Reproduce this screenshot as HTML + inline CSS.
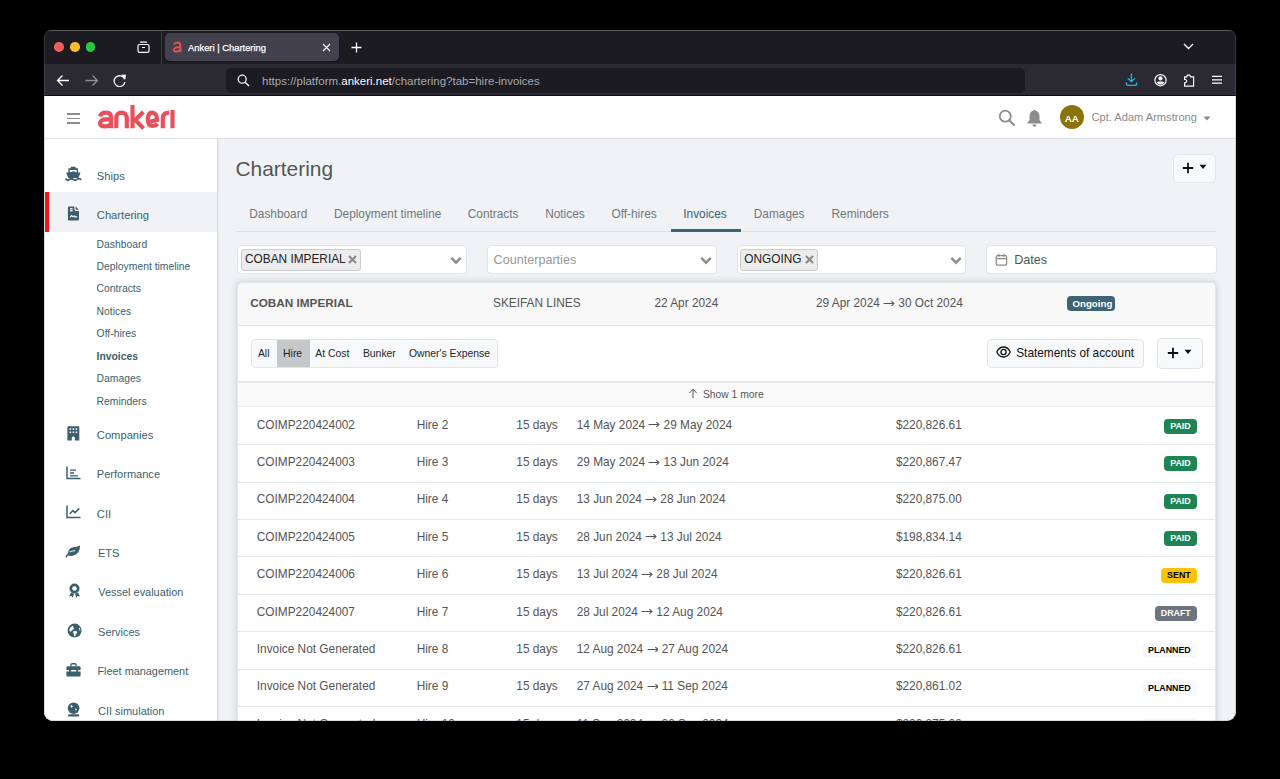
<!DOCTYPE html>
<html><head><meta charset="utf-8"><title>Ankeri | Chartering</title>
<style>
html,body{margin:0;padding:0;background:#000;width:1280px;height:779px;overflow:hidden;}
body{font-family:"Liberation Sans", sans-serif;}
#win{position:absolute;left:0;top:0;width:1280px;height:779px;clip-path:inset(30px 44px 58px 44px round 7px 7px 9px 9px);}
.t{position:absolute;line-height:1;white-space:nowrap;}
.r{position:absolute;display:block;}
</style></head><body><div id="win">
<div class="r" style="left:44px;top:30px;width:1192px;height:34px;background:#1c1b22;"></div>
<div class="r" style="left:44px;top:30px;width:1192px;height:1px;background:#4a4a52;"></div>
<div class="r" style="left:44px;top:64px;width:1192px;height:31px;background:#2b2a33;"></div>
<div class="r" style="left:44px;top:95px;width:1192px;height:1px;background:#0b0b0f;"></div>
<div class="r" style="left:54.4px;top:42px;width:9.6px;height:9.6px;border-radius:50%;background:#ee5f57;"></div>
<div class="r" style="left:70.0px;top:42px;width:9.6px;height:9.6px;border-radius:50%;background:#fbbd2e;"></div>
<div class="r" style="left:85.6px;top:42px;width:9.6px;height:9.6px;border-radius:50%;background:#28c840;"></div>
<svg class="r" style="left:137px;top:41px;" width="13" height="12" viewBox="0 0 13 12"><rect x="1" y="3.5" width="11" height="7.8" rx="1.6" fill="none" stroke="#fbfbfe" stroke-width="1.2"/><path d="M3 1.2h7" stroke="#fbfbfe" stroke-width="1.2"/><path d="M5 6.5h3" stroke="#fbfbfe" stroke-width="1.2"/></svg>
<div class="r" style="left:161px;top:31px;width:1px;height:33px;background:#3a3944;"></div>
<div class="r" style="left:165px;top:33px;width:174px;height:28px;background:#42414d;border-radius:5px;"></div>
<svg class="r" style="left:172px;top:41px;" width="10" height="12" viewBox="0 0 10 12"><path d="M1.9 3.4C2.8 1.8 4.2 1.4 5.2 1.4 7.2 1.4 8.3 2.6 8.3 4.6V11.2M8.3 6.4C4.8 6 1.8 6.6 1.8 8.8 1.8 10.8 5.8 11 8.3 9.2" fill="none" stroke="#e84e55" stroke-width="2"/></svg>
<div class="t" style="left:188.00px;top:42.74px;font-size:9.4px;color:#fbfbfe;-webkit-text-stroke:0.25px #fbfbfe;">Ankeri | Chartering</div>
<svg class="r" style="left:322px;top:43px;" width="9" height="9" viewBox="0 0 9 9"><path d="M1 1L8 8M8 1L1 8" stroke="#fbfbfe" stroke-width="1.15"/></svg>
<svg class="r" style="left:351px;top:42px;" width="11" height="11" viewBox="0 0 11 11"><path d="M5.5 0.5V10.5M0.5 5.5H10.5" stroke="#fbfbfe" stroke-width="1.3"/></svg>
<svg class="r" style="left:1183px;top:43px;" width="11" height="7" viewBox="0 0 11 7"><path d="M1 1L5.5 5.5L10 1" fill="none" stroke="#fbfbfe" stroke-width="1.3"/></svg>
<svg class="r" style="left:56px;top:74px;" width="14" height="13" viewBox="0 0 14 13"><path d="M1.5 6.5H13M6.5 1.5L1.5 6.5L6.5 11.5" fill="none" stroke="#fbfbfe" stroke-width="1.3"/></svg>
<svg class="r" style="left:85px;top:74px;" width="14" height="13" viewBox="0 0 14 13"><path d="M0.5 6.5H12M7.5 1.5L12.5 6.5L7.5 11.5" fill="none" stroke="#8f8f9d" stroke-width="1.3"/></svg>
<svg class="r" style="left:113px;top:74px;" width="14" height="13" viewBox="0 0 14 13"><path d="M11.6 5.2A5.4 5.4 0 1 0 11.9 8" fill="none" stroke="#fbfbfe" stroke-width="1.3"/><path d="M8.2 0.8L12.8 0.6L12.6 5.2Z" fill="#fbfbfe"/></svg>
<div class="r" style="left:226px;top:68px;width:799px;height:25px;background:#1c1b22;border-radius:5px;"></div>
<svg class="r" style="left:237px;top:74px;" width="13" height="13" viewBox="0 0 13 13"><circle cx="5.2" cy="5.2" r="4" fill="none" stroke="#fbfbfe" stroke-width="1.3"/><path d="M8.2 8.2L12 12" stroke="#fbfbfe" stroke-width="1.4"/></svg>
<div class="t" style="left:262.00px;top:75.57px;font-size:11.5px;color:#fbfbfe;"><span style="color:#a8a8b0">https://platform.</span>ankeri.net<span style="color:#a8a8b0">/chartering?tab=hire-invoices</span></div>
<svg class="r" style="left:1124px;top:72px;" width="15" height="15" viewBox="0 0 15 15"><path d="M7.4 1.6V9.6M3.8 6.2L7.4 9.7L11 6.2" fill="none" stroke="#1fb6e0" stroke-width="1.3"/><path d="M2.4 10.6V12C2.4 12.9 3 13.4 3.8 13.4H11.2C12 13.4 12.6 12.9 12.6 12V10.6" fill="none" stroke="#1fb6e0" stroke-width="1.4"/></svg>
<svg class="r" style="left:1153px;top:73px;" width="15" height="15" viewBox="0 0 15 15"><circle cx="7.5" cy="7.2" r="5.6" fill="none" stroke="#fbfbfe" stroke-width="1.2"/><circle cx="7.5" cy="5.4" r="2.1" fill="#fbfbfe"/><path d="M3.6 9.2C5 8.3 10 8.3 11.4 9.2 10.6 10.8 9.2 11.5 7.5 11.5 5.8 11.5 4.4 10.8 3.6 9.2Z" fill="#fbfbfe"/></svg>
<svg class="r" style="left:1182px;top:73px;" width="14" height="15" viewBox="0 0 14 15"><path d="M2.6 3.8H4.9C4.7 1.1 8.6 1.1 8.4 3.8H11.6V13.2H2.6V9.8C5.3 10 5.3 6.2 2.6 6.4Z" fill="none" stroke="#fbfbfe" stroke-width="1.2" stroke-linejoin="round"/></svg>
<svg class="r" style="left:1211px;top:74px;" width="12" height="11" viewBox="0 0 12 11"><path d="M1 2.4H11M1 5.8H11M1 9.1H11" stroke="#fbfbfe" stroke-width="1.3"/></svg>
<div class="r" style="left:44px;top:96px;width:1192px;height:625px;background:#f0f2f5;"></div>
<div class="r" style="left:44px;top:96px;width:1192px;height:42px;background:#fff;"></div>
<div class="r" style="left:44px;top:138px;width:1192px;height:1px;background:#dfe3e8;"></div>
<div class="r" style="left:67px;top:113.2px;width:12.5px;height:1.6px;background:#8c8c8c;"></div>
<div class="r" style="left:67px;top:117.7px;width:12.5px;height:1.6px;background:#8c8c8c;"></div>
<div class="r" style="left:67px;top:122.2px;width:12.5px;height:1.6px;background:#8c8c8c;"></div>
<svg class="r" style="left:97px;top:104px;" width="80" height="26" viewBox="0 0 80 26"><g fill="none" stroke="#e8505b" stroke-width="4.2" stroke-linecap="butt"><path d="M2.9 12.4C3.8 9.8 6.5 8.6 9.2 8.6 12.4 8.6 14.2 10.4 14.2 13.6V24.2"/><path d="M14.2 15.3H8.8C5.4 15.3 3.1 16.8 3.1 19.3 3.1 21.8 5.2 22.4 8 22.4 10.7 22.4 12.9 21.5 14.2 19.9"/><path d="M19.3 24.2V14C19.3 10.5 21.5 8.6 24.5 8.6 27.6 8.6 29.8 10.5 29.8 14V24.2"/><path d="M35.5 1V24.2"/><path d="M46.4 8L38.1 15.9L46.6 24.4"/><path d="M51.2 18.2L60.2 15.8C59.9 11.2 57.8 8.6 55.2 8.6 52.2 8.6 50.9 11.8 50.9 15.6 50.9 20 52.6 22 55.6 22 57.6 22 59.3 21.3 60.6 19.8"/><path d="M65.8 24.2V14.2C65.8 10.2 68.3 8.6 72.2 8.6"/><path d="M75.5 6V24.2"/></g></svg>
<svg class="r" style="left:998px;top:109px;" width="18" height="17" viewBox="0 0 18 17"><circle cx="7.3" cy="7.2" r="5.5" fill="none" stroke="#8c8c8c" stroke-width="1.8"/><path d="M11.2 11.2L16 16" stroke="#8c8c8c" stroke-width="2" stroke-linecap="round"/></svg>
<svg class="r" style="left:1026px;top:109px;" width="17" height="19" viewBox="0 0 17 19"><path d="M8.5 0.4L9.4 1.6C12 2.2 13.5 4.6 13.5 7.3V11.2L15.6 13.8V14.6H1.4V13.8L3.5 11.2V7.3C3.5 4.6 5 2.2 7.6 1.6Z" fill="#8c8c8c"/><path d="M6.5 15.6H10.5C10.5 17 9.6 17.8 8.5 17.8 7.4 17.8 6.5 17 6.5 15.6Z" fill="#8a8a8a"/></svg>
<div class="r" style="left:1060px;top:105px;width:24px;height:24px;border-radius:50%;background:#8b740c;"></div>
<div class="t" style="left:1064.80px;top:114.00px;font-size:9.8px;color:#fff;font-weight:700;">AA</div>
<div class="t" style="left:1091.50px;top:111.60px;font-size:11.1px;color:#8a8a8a;">Cpt. Adam Armstrong</div>
<svg class="r" style="left:1203px;top:116px;" width="8" height="5" viewBox="0 0 8 5"><path d="M0.5 0.5H7.5L4 4.5Z" fill="#8a8a8a"/></svg>
<div class="r" style="left:44px;top:139px;width:173px;height:582px;background:#fff;"></div>
<div class="r" style="left:217px;top:139px;width:1px;height:582px;background:#d9dcdf;"></div>
<div class="r" style="left:218px;top:139px;width:1px;height:582px;background:#e6e9ec;"></div>
<div class="r" style="left:45px;top:192px;width:172px;height:40px;background:#f0f2f5;"></div>
<div class="r" style="left:45px;top:192px;width:4px;height:40px;background:#f5141e;"></div>
<div class="t" style="left:96.80px;top:170.82px;font-size:11.2px;color:#3b5f6d;">Ships</div>
<div class="t" style="left:96.80px;top:210.22px;font-size:11.2px;color:#3b5f6d;">Chartering</div>
<div class="t" style="left:96.80px;top:430.12px;font-size:11.2px;color:#3b5f6d;">Companies</div>
<div class="t" style="left:96.80px;top:469.45px;font-size:11.05px;color:#3b5f6d;">Performance</div>
<div class="t" style="left:96.80px;top:508.72px;font-size:11.2px;color:#3b5f6d;">CII</div>
<div class="t" style="left:97.90px;top:547.85px;font-size:11.05px;color:#3b5f6d;">ETS</div>
<div class="t" style="left:98.30px;top:587.43px;font-size:10.95px;color:#3b5f6d;">Vessel evaluation</div>
<div class="t" style="left:98.10px;top:626.83px;font-size:10.95px;color:#3b5f6d;">Services</div>
<div class="t" style="left:97.40px;top:666.07px;font-size:10.9px;color:#3b5f6d;">Fleet management</div>
<div class="t" style="left:98.10px;top:705.63px;font-size:10.95px;color:#3b5f6d;">CII simulation</div>
<div class="t" style="left:96.60px;top:239.54px;font-size:10.35px;color:#3b5f6d;">Dashboard</div>
<div class="t" style="left:96.60px;top:261.97px;font-size:10.35px;color:#3b5f6d;">Deployment timeline</div>
<div class="t" style="left:96.60px;top:284.40px;font-size:10.35px;color:#3b5f6d;">Contracts</div>
<div class="t" style="left:96.60px;top:306.83px;font-size:10.35px;color:#3b5f6d;">Notices</div>
<div class="t" style="left:96.60px;top:329.26px;font-size:10.35px;color:#3b5f6d;">Off-hires</div>
<div class="t" style="left:96.60px;top:351.69px;font-size:10.35px;color:#3b5f6d;font-weight:700;">Invoices</div>
<div class="t" style="left:96.60px;top:374.12px;font-size:10.35px;color:#3b5f6d;">Damages</div>
<div class="t" style="left:96.60px;top:396.55px;font-size:10.35px;color:#3b5f6d;">Reminders</div>
<svg class="r" style="left:65px;top:166px;" width="17" height="16" viewBox="0 0 17 16"><path d="M5.8 0.7H10.6V2.2H13V7.2H3.4V2.2H5.8Z" fill="#3b5f6d"/><path d="M4.8 3.9H11.6V6.4C10.2 6.4 9.6 5.3 8.2 5.3 6.8 5.3 6.2 6.4 4.8 6.4Z" fill="#fff"/><path d="M1.2 6.8C1.2 6.6 1.4 6.5 1.6 6.5H15C15.2 6.5 15.4 6.6 15.4 6.8L13.4 11.9H3.2Z" fill="#3b5f6d"/><path d="M1 13.2C2.2 14.5 3.4 14.5 4.6 13.4 5.8 12.5 7 12.5 8.2 13.4 9.4 14.5 10.8 14.5 12 13.4 13.2 12.5 14.4 12.5 15.6 13.2" fill="none" stroke="#3b5f6d" stroke-width="1.8" stroke-linecap="round"/></svg>
<svg class="r" style="left:67px;top:206px;" width="13" height="15" viewBox="0 0 13 15"><path d="M2.2 0.4H7.4V3.6C7.4 4.4 8 5 8.8 5H12V13C12 13.9 11.4 14.6 10.5 14.6H2.4C1.5 14.6 0.9 13.9 0.9 13V1.8C0.9 1 1.4 0.4 2.2 0.4Z" fill="#3b5f6d"/><path d="M8.6 0.6L11.8 3.8H8.6Z" fill="#3b5f6d"/><rect x="3" y="2.1" width="2.6" height="1.3" fill="#fff"/><rect x="3" y="4.1" width="2.6" height="1.3" fill="#fff"/><path d="M3 11.4L4.6 9.6L5.9 10.8L7.2 9.9L8.1 10.9H10.2" fill="none" stroke="#fff" stroke-width="1.1"/></svg>
<svg class="r" style="left:67px;top:426px;" width="13" height="15" viewBox="0 0 13 15"><path d="M1.5 0.3H11.2C11.9 0.3 12.3 0.8 12.3 1.4V14.5H7.8V12C7.8 11.2 7.1 10.6 6.3 10.6 5.5 10.6 4.8 11.2 4.8 12V14.5H0.4V1.4C0.4 0.8 0.8 0.3 1.5 0.3Z" fill="#3b5f6d"/><g fill="#fff"><rect x="2.6" y="2.3" width="1.6" height="1.6"/><rect x="5.6" y="2.3" width="1.6" height="1.6"/><rect x="8.6" y="2.3" width="1.6" height="1.6"/><rect x="2.6" y="5.5" width="1.6" height="1.6"/><rect x="5.6" y="5.5" width="1.6" height="1.6"/><rect x="8.6" y="5.5" width="1.6" height="1.6"/></g></svg>
<svg class="r" style="left:66px;top:466px;" width="15" height="14" viewBox="0 0 15 14"><path d="M1 0.5V12.6H14.5" fill="none" stroke="#3b5f6d" stroke-width="1.5"/><path d="M4 4.2H10M4 7H8M4 9.8H12" stroke="#3b5f6d" stroke-width="1.3"/></svg>
<svg class="r" style="left:66px;top:505px;" width="15" height="14" viewBox="0 0 15 14"><path d="M1 0.5V12.6H14.5" fill="none" stroke="#3b5f6d" stroke-width="1.5"/><path d="M3.8 9L6.8 5.6L9 7.6L13.2 3.4" fill="none" stroke="#3b5f6d" stroke-width="1.5"/></svg>
<svg class="r" style="left:65px;top:545px;" width="16" height="13" viewBox="0 0 16 13"><path d="M1 12.5C2.5 9 5 6.6 9 5.5 5.5 7.2 3.8 9 3 10.5 6 11.5 11 10.8 13.5 7 14.8 5 15 2.5 15 0.5 12 2.5 8 1.3 5.2 3.5 3.3 5 3 7.2 3.3 8.6" fill="#3b5f6d"/><path d="M1 12.5C2.5 9 5 6.6 9 5.5" fill="none" stroke="#3b5f6d" stroke-width="1.4"/><path d="M4.6 7.2C6 6 8 5.6 10.2 5.7" fill="none" stroke="#fff" stroke-width="1.1"/></svg>
<svg class="r" style="left:68px;top:583px;" width="13" height="15" viewBox="0 0 13 15"><circle cx="6.5" cy="5.5" r="5" fill="#3b5f6d"/><circle cx="6.5" cy="5.5" r="2.3" fill="#fff"/><path d="M3 9.5L1 13.5L3.5 13L4.6 14.8L6 10.8M10 9.5L12 13.5L9.5 13L8.4 14.8L7 10.8" fill="#3b5f6d"/></svg>
<svg class="r" style="left:67px;top:623px;" width="15" height="15" viewBox="0 0 15 15"><circle cx="7.6" cy="7.6" r="7" fill="#3b5f6d"/><path d="M2.3 7.8C2.4 5.6 3.6 3.9 5.3 2.9L6.6 3.4 6 4.6 7.2 5.3 6.4 6.6 4.8 6.9 4.6 8.2 3.4 8.6Z" fill="#fff"/><path d="M6.2 8.2L8.8 7.9 10.2 8.8 9.8 10.6 8.6 11.6 8.2 13.4 7.3 13.2 6.8 11 6.1 9.6Z" fill="#fff"/><path d="M12 4.2C12.9 5.1 13.4 6.3 13.5 7.6L12.6 7.4 12.1 6Z" fill="#fff"/></svg>
<svg class="r" style="left:66px;top:663px;" width="15" height="14" viewBox="0 0 15 14"><path d="M5 3.2V1.8C5 1.2 5.4 0.8 6 0.8H9C9.6 0.8 10 1.2 10 1.8V3.2" fill="none" stroke="#3b5f6d" stroke-width="1.4"/><path d="M1.8 3.2H13.2C14 3.2 14.6 3.8 14.6 4.6V7H0.4V4.6C0.4 3.8 1 3.2 1.8 3.2Z" fill="#3b5f6d"/><path d="M0.4 8.4H14.6V12.2C14.6 13 14 13.6 13.2 13.6H1.8C1 13.6 0.4 13 0.4 12.2Z" fill="#3b5f6d"/><rect x="3" y="6" width="1.8" height="3.2" fill="#3b5f6d"/><rect x="10.2" y="6" width="1.8" height="3.2" fill="#3b5f6d"/></svg>
<svg class="r" style="left:67px;top:702px;" width="14" height="15" viewBox="0 0 14 15"><circle cx="6.6" cy="6.2" r="5.8" fill="#3b5f6d"/><path d="M4.6 2.4L5.1 3.8L6.5 4.3L5.1 4.8L4.6 6.2L4.1 4.8L2.7 4.3L4.1 3.8Z" fill="#fff"/><circle cx="9" cy="7.4" r="0.9" fill="#fff" opacity=".8"/><path d="M1.6 12.3H11.6L12.4 14.4H0.8Z" fill="#3b5f6d"/></svg>
<div class="t" style="left:235.50px;top:158.51px;font-size:20.9px;color:#555;">Chartering</div>
<div class="r" style="left:1173px;top:154px;width:43px;height:29px;background:#f8f9fa;border:1px solid #e3e6ea;border-radius:5px;box-sizing:border-box;"></div>
<svg class="r" style="left:1182px;top:162px;" width="12" height="12" viewBox="0 0 12 12"><path d="M6 0.8V11.2M0.8 6H11.2" stroke="#111" stroke-width="1.8"/></svg>
<svg class="r" style="left:1199px;top:164px;" width="8" height="6" viewBox="0 0 8 6"><path d="M0.5 0.8H7.5L4 5Z" fill="#111"/></svg>
<div class="t" style="left:249.30px;top:208.97px;font-size:11.85px;color:#6f777c;">Dashboard</div>
<div class="t" style="left:334.00px;top:208.97px;font-size:11.85px;color:#6f777c;">Deployment timeline</div>
<div class="t" style="left:467.80px;top:208.97px;font-size:11.85px;color:#6f777c;">Contracts</div>
<div class="t" style="left:545.20px;top:208.97px;font-size:11.85px;color:#6f777c;">Notices</div>
<div class="t" style="left:611.50px;top:208.97px;font-size:11.85px;color:#6f777c;">Off-hires</div>
<div class="t" style="left:683.30px;top:208.97px;font-size:11.85px;color:#3d6472;">Invoices</div>
<div class="t" style="left:753.80px;top:208.97px;font-size:11.85px;color:#6f777c;">Damages</div>
<div class="t" style="left:831.50px;top:208.97px;font-size:11.85px;color:#6f777c;">Reminders</div>
<div class="r" style="left:236px;top:231px;width:980px;height:1px;background:#dde1e6;"></div>
<div class="r" style="left:671px;top:229px;width:70px;height:3px;background:#3d6472;"></div>
<div class="r" style="left:236.8px;top:244.6px;width:230.4px;height:29.4px;background:#fff;border:1px solid #e1e4e8;border-radius:4px;box-sizing:border-box;"></div>
<div class="r" style="left:486.8px;top:244.6px;width:229.8px;height:29.4px;background:#fff;border:1px solid #e1e4e8;border-radius:4px;box-sizing:border-box;"></div>
<div class="r" style="left:736.8px;top:244.6px;width:229.6px;height:29.4px;background:#fff;border:1px solid #e1e4e8;border-radius:4px;box-sizing:border-box;"></div>
<div class="r" style="left:986.4px;top:244.6px;width:230.2px;height:29.4px;background:#fff;border:1px solid #e1e4e8;border-radius:4px;box-sizing:border-box;"></div>
<div class="r" style="left:241px;top:249px;width:120px;height:22px;background:#ececec;border:1px solid #c9cbcf;border-radius:3px;box-sizing:border-box;"></div>
<div class="t" style="left:245.00px;top:253.67px;font-size:11.85px;color:#222;">COBAN IMPERIAL</div>
<svg class="r" style="left:348px;top:255px;" width="9" height="9" viewBox="0 0 9 9"><path d="M1 1L8 8M8 1L1 8" stroke="#888" stroke-width="2"/></svg>
<div class="r" style="left:740px;top:249px;width:78px;height:22px;background:#ececec;border:1px solid #c9cbcf;border-radius:3px;box-sizing:border-box;"></div>
<div class="t" style="left:744.20px;top:253.67px;font-size:11.85px;color:#222;">ONGOING</div>
<svg class="r" style="left:805px;top:255px;" width="9" height="9" viewBox="0 0 9 9"><path d="M1 1L8 8M8 1L1 8" stroke="#888" stroke-width="2"/></svg>
<svg class="r" style="left:450px;top:256px;" width="12" height="9" viewBox="0 0 12 9"><path d="M1.3 1.8L6 6.6L10.7 1.8" fill="none" stroke="#8e8e8e" stroke-width="2.5"/></svg>
<svg class="r" style="left:700px;top:256px;" width="12" height="9" viewBox="0 0 12 9"><path d="M1.3 1.8L6 6.6L10.7 1.8" fill="none" stroke="#8e8e8e" stroke-width="2.5"/></svg>
<svg class="r" style="left:950px;top:256px;" width="12" height="9" viewBox="0 0 12 9"><path d="M1.3 1.8L6 6.6L10.7 1.8" fill="none" stroke="#8e8e8e" stroke-width="2.5"/></svg>
<div class="t" style="left:493.60px;top:254.03px;font-size:12.6px;color:#999;">Counterparties</div>
<svg class="r" style="left:995px;top:253px;" width="13" height="13" viewBox="0 0 13 13"><rect x="1.2" y="2.6" width="10.4" height="9.6" rx="1.4" fill="none" stroke="#888" stroke-width="1.2"/><path d="M1.2 5.6H11.6M3.8 0.8V3.8M9 0.8V3.8" stroke="#888" stroke-width="1.2"/></svg>
<div class="t" style="left:1014.20px;top:254.03px;font-size:12.6px;color:#555;">Dates</div>
<div class="r" style="left:237px;top:282px;width:979px;height:460px;background:#fff;border-radius:5px;box-shadow:0 0 7px 1px rgba(0,0,0,.12),0 0 2px rgba(0,0,0,.05);border:1px solid #e3e6ea;box-sizing:border-box;"></div>
<div class="r" style="left:238px;top:283px;width:977px;height:42px;background:#f8f8f8;border-radius:4px 4px 0 0;"></div>
<div class="r" style="left:238px;top:325px;width:977px;height:1px;background:#e3e6ea;"></div>
<div class="t" style="left:250.20px;top:297.35px;font-size:11.75px;color:#555;font-weight:700;">COBAN IMPERIAL</div>
<div class="t" style="left:493.00px;top:297.97px;font-size:11.85px;color:#555;">SKEIFAN LINES</div>
<div class="t" style="left:654.40px;top:297.97px;font-size:11.85px;color:#555;">22 Apr 2024</div>
<div class="t" style="left:816.00px;top:297.97px;font-size:11.85px;color:#555;">29 Apr 2024 <svg width="1em" height="0.6em" viewBox="0 0 12 7" style="vertical-align:0.03em"><path d="M0.6 3.5H11M8.5 1.1L11.1 3.5L8.5 5.9" fill="none" stroke="currentColor" stroke-width="1.1"/></svg> 30 Oct 2024</div>
<div class="r" style="left:1066.5px;top:296px;width:48.5px;height:15px;border-radius:4px;background:#3d6472;"></div>
<div class="t" style="left:1072.50px;top:298.79px;font-size:9.7px;color:#fff;font-weight:700;">Ongoing</div>
<div class="r" style="left:251px;top:339px;width:247px;height:29px;background:#f8f9fa;border:1px solid #e1e4e8;border-radius:4px;box-sizing:border-box;"></div>
<div class="r" style="left:276.5px;top:340px;width:33px;height:27px;background:#c6c7c9;"></div>
<div class="t" style="left:257.90px;top:348.50px;font-size:10.4px;color:#212529;">All</div>
<div class="t" style="left:283.10px;top:348.50px;font-size:10.4px;color:#212529;">Hire</div>
<div class="t" style="left:315.30px;top:348.50px;font-size:10.4px;color:#212529;">At Cost</div>
<div class="t" style="left:362.90px;top:348.50px;font-size:10.4px;color:#212529;">Bunker</div>
<div class="t" style="left:408.90px;top:348.50px;font-size:10.4px;color:#212529;">Owner's Expense</div>
<div class="r" style="left:987px;top:339px;width:157px;height:29px;background:#f8f9fa;border:1px solid #e1e4e8;border-radius:4px;box-sizing:border-box;"></div>
<svg class="r" style="left:996px;top:346px;" width="15" height="12" viewBox="0 0 15 12"><path d="M0.8 6C2.5 2.4 5 1 7.5 1S12.5 2.4 14.2 6C12.5 9.6 10 11 7.5 11S2.5 9.6 0.8 6Z" fill="none" stroke="#111" stroke-width="1.3"/><circle cx="7.5" cy="6" r="2.6" fill="none" stroke="#111" stroke-width="1.3"/></svg>
<div class="t" style="left:1016.20px;top:348.42px;font-size:11.85px;color:#111;">Statements of account</div>
<div class="r" style="left:1157px;top:338px;width:46px;height:31px;background:#f8f9fa;border:1px solid #e1e4e8;border-radius:4px;box-sizing:border-box;"></div>
<svg class="r" style="left:1167px;top:347px;" width="12" height="12" viewBox="0 0 12 12"><path d="M6 0.8V11.2M0.8 6H11.2" stroke="#111" stroke-width="1.8"/></svg>
<svg class="r" style="left:1184px;top:349px;" width="8" height="6" viewBox="0 0 8 6"><path d="M0.5 0.8H7.5L4 5Z" fill="#111"/></svg>
<div class="r" style="left:238px;top:381px;width:977px;height:2px;background:#e6e9ed;"></div>
<div class="r" style="left:238px;top:383px;width:977px;height:23px;background:#fafafa;"></div>
<div class="r" style="left:238px;top:406px;width:977px;height:1px;background:#e6e9ed;"></div>
<svg class="r" style="left:688px;top:388px;" width="10" height="11" viewBox="0 0 10 11"><path d="M5 10V1.4M1.4 5L5 1.2L8.6 5" fill="none" stroke="#555" stroke-width="1"/></svg>
<div class="t" style="left:703.00px;top:389.78px;font-size:10.3px;color:#555;">Show 1 more</div>
<div class="t" style="left:256.80px;top:419.57px;font-size:11.85px;color:#555;">COIMP220424002</div>
<div class="t" style="left:416.70px;top:419.57px;font-size:11.85px;color:#555;">Hire 2</div>
<div class="t" style="left:516.30px;top:419.57px;font-size:11.85px;color:#555;">15 days</div>
<div class="t" style="left:576.70px;top:419.57px;font-size:11.85px;color:#555;">14 May 2024 <svg width="1em" height="0.6em" viewBox="0 0 12 7" style="vertical-align:0.03em"><path d="M0.6 3.5H11M8.5 1.1L11.1 3.5L8.5 5.9" fill="none" stroke="currentColor" stroke-width="1.1"/></svg> 29 May 2024</div>
<div class="t" style="left:895.90px;top:419.57px;font-size:11.85px;color:#555;">$220,826.61</div>
<div class="r" style="left:1164.2px;top:418.80px;width:32.4px;height:15px;border-radius:4px;background:#1e8552;"></div>
<div class="t" style="left:1164.2px;width:32.4px;top:418.80px;height:15px;line-height:15px;font-size:8.85px;font-weight:700;color:#fff;text-align:center;">PAID</div>
<div class="r" style="left:238px;top:444px;width:977px;height:1px;background:#e6e9ed;"></div>
<div class="t" style="left:256.80px;top:456.97px;font-size:11.85px;color:#555;">COIMP220424003</div>
<div class="t" style="left:416.70px;top:456.97px;font-size:11.85px;color:#555;">Hire 3</div>
<div class="t" style="left:516.30px;top:456.97px;font-size:11.85px;color:#555;">15 days</div>
<div class="t" style="left:576.70px;top:456.97px;font-size:11.85px;color:#555;">29 May 2024 <svg width="1em" height="0.6em" viewBox="0 0 12 7" style="vertical-align:0.03em"><path d="M0.6 3.5H11M8.5 1.1L11.1 3.5L8.5 5.9" fill="none" stroke="currentColor" stroke-width="1.1"/></svg> 13 Jun 2024</div>
<div class="t" style="left:895.90px;top:456.97px;font-size:11.85px;color:#555;">$220,867.47</div>
<div class="r" style="left:1164.2px;top:456.20px;width:32.4px;height:15px;border-radius:4px;background:#1e8552;"></div>
<div class="t" style="left:1164.2px;width:32.4px;top:456.20px;height:15px;line-height:15px;font-size:8.85px;font-weight:700;color:#fff;text-align:center;">PAID</div>
<div class="r" style="left:238px;top:482px;width:977px;height:1px;background:#e6e9ed;"></div>
<div class="t" style="left:256.80px;top:494.37px;font-size:11.85px;color:#555;">COIMP220424004</div>
<div class="t" style="left:416.70px;top:494.37px;font-size:11.85px;color:#555;">Hire 4</div>
<div class="t" style="left:516.30px;top:494.37px;font-size:11.85px;color:#555;">15 days</div>
<div class="t" style="left:576.70px;top:494.37px;font-size:11.85px;color:#555;">13 Jun 2024 <svg width="1em" height="0.6em" viewBox="0 0 12 7" style="vertical-align:0.03em"><path d="M0.6 3.5H11M8.5 1.1L11.1 3.5L8.5 5.9" fill="none" stroke="currentColor" stroke-width="1.1"/></svg> 28 Jun 2024</div>
<div class="t" style="left:895.90px;top:494.37px;font-size:11.85px;color:#555;">$220,875.00</div>
<div class="r" style="left:1164.2px;top:493.60px;width:32.4px;height:15px;border-radius:4px;background:#1e8552;"></div>
<div class="t" style="left:1164.2px;width:32.4px;top:493.60px;height:15px;line-height:15px;font-size:8.85px;font-weight:700;color:#fff;text-align:center;">PAID</div>
<div class="r" style="left:238px;top:519px;width:977px;height:1px;background:#e6e9ed;"></div>
<div class="t" style="left:256.80px;top:531.77px;font-size:11.85px;color:#555;">COIMP220424005</div>
<div class="t" style="left:416.70px;top:531.77px;font-size:11.85px;color:#555;">Hire 5</div>
<div class="t" style="left:516.30px;top:531.77px;font-size:11.85px;color:#555;">15 days</div>
<div class="t" style="left:576.70px;top:531.77px;font-size:11.85px;color:#555;">28 Jun 2024 <svg width="1em" height="0.6em" viewBox="0 0 12 7" style="vertical-align:0.03em"><path d="M0.6 3.5H11M8.5 1.1L11.1 3.5L8.5 5.9" fill="none" stroke="currentColor" stroke-width="1.1"/></svg> 13 Jul 2024</div>
<div class="t" style="left:895.90px;top:531.77px;font-size:11.85px;color:#555;">$198,834.14</div>
<div class="r" style="left:1164.2px;top:531.00px;width:32.4px;height:15px;border-radius:4px;background:#1e8552;"></div>
<div class="t" style="left:1164.2px;width:32.4px;top:531.00px;height:15px;line-height:15px;font-size:8.85px;font-weight:700;color:#fff;text-align:center;">PAID</div>
<div class="r" style="left:238px;top:556px;width:977px;height:1px;background:#e6e9ed;"></div>
<div class="t" style="left:256.80px;top:569.17px;font-size:11.85px;color:#555;">COIMP220424006</div>
<div class="t" style="left:416.70px;top:569.17px;font-size:11.85px;color:#555;">Hire 6</div>
<div class="t" style="left:516.30px;top:569.17px;font-size:11.85px;color:#555;">15 days</div>
<div class="t" style="left:576.70px;top:569.17px;font-size:11.85px;color:#555;">13 Jul 2024 <svg width="1em" height="0.6em" viewBox="0 0 12 7" style="vertical-align:0.03em"><path d="M0.6 3.5H11M8.5 1.1L11.1 3.5L8.5 5.9" fill="none" stroke="currentColor" stroke-width="1.1"/></svg> 28 Jul 2024</div>
<div class="t" style="left:895.90px;top:569.17px;font-size:11.85px;color:#555;">$220,826.61</div>
<div class="r" style="left:1161.2px;top:568.40px;width:35.4px;height:15px;border-radius:4px;background:#ffc107;"></div>
<div class="t" style="left:1161.2px;width:35.4px;top:568.40px;height:15px;line-height:15px;font-size:8.85px;font-weight:700;color:#000;text-align:center;">SENT</div>
<div class="r" style="left:238px;top:594px;width:977px;height:1px;background:#e6e9ed;"></div>
<div class="t" style="left:256.80px;top:606.57px;font-size:11.85px;color:#555;">COIMP220424007</div>
<div class="t" style="left:416.70px;top:606.57px;font-size:11.85px;color:#555;">Hire 7</div>
<div class="t" style="left:516.30px;top:606.57px;font-size:11.85px;color:#555;">15 days</div>
<div class="t" style="left:576.70px;top:606.57px;font-size:11.85px;color:#555;">28 Jul 2024 <svg width="1em" height="0.6em" viewBox="0 0 12 7" style="vertical-align:0.03em"><path d="M0.6 3.5H11M8.5 1.1L11.1 3.5L8.5 5.9" fill="none" stroke="currentColor" stroke-width="1.1"/></svg> 12 Aug 2024</div>
<div class="t" style="left:895.90px;top:606.57px;font-size:11.85px;color:#555;">$220,826.61</div>
<div class="r" style="left:1155px;top:605.80px;width:41.6px;height:15px;border-radius:4px;background:#6c757d;"></div>
<div class="t" style="left:1155px;width:41.6px;top:605.80px;height:15px;line-height:15px;font-size:8.85px;font-weight:700;color:#fff;text-align:center;">DRAFT</div>
<div class="r" style="left:238px;top:631px;width:977px;height:1px;background:#e6e9ed;"></div>
<div class="t" style="left:256.80px;top:643.97px;font-size:11.85px;color:#555;">Invoice Not Generated</div>
<div class="t" style="left:416.70px;top:643.97px;font-size:11.85px;color:#555;">Hire 8</div>
<div class="t" style="left:516.30px;top:643.97px;font-size:11.85px;color:#555;">15 days</div>
<div class="t" style="left:576.70px;top:643.97px;font-size:11.85px;color:#555;">12 Aug 2024 <svg width="1em" height="0.6em" viewBox="0 0 12 7" style="vertical-align:0.03em"><path d="M0.6 3.5H11M8.5 1.1L11.1 3.5L8.5 5.9" fill="none" stroke="currentColor" stroke-width="1.1"/></svg> 27 Aug 2024</div>
<div class="t" style="left:895.90px;top:643.97px;font-size:11.85px;color:#555;">$220,826.61</div>
<div class="r" style="left:1142.2px;top:643.20px;width:54.4px;height:15px;border-radius:4px;background:#f8f9fa;"></div>
<div class="t" style="left:1142.2px;width:54.4px;top:643.20px;height:15px;line-height:15px;font-size:8.85px;font-weight:700;color:#000;text-align:center;">PLANNED</div>
<div class="r" style="left:238px;top:669px;width:977px;height:1px;background:#e6e9ed;"></div>
<div class="t" style="left:256.80px;top:681.37px;font-size:11.85px;color:#555;">Invoice Not Generated</div>
<div class="t" style="left:416.70px;top:681.37px;font-size:11.85px;color:#555;">Hire 9</div>
<div class="t" style="left:516.30px;top:681.37px;font-size:11.85px;color:#555;">15 days</div>
<div class="t" style="left:576.70px;top:681.37px;font-size:11.85px;color:#555;">27 Aug 2024 <svg width="1em" height="0.6em" viewBox="0 0 12 7" style="vertical-align:0.03em"><path d="M0.6 3.5H11M8.5 1.1L11.1 3.5L8.5 5.9" fill="none" stroke="currentColor" stroke-width="1.1"/></svg> 11 Sep 2024</div>
<div class="t" style="left:895.90px;top:681.37px;font-size:11.85px;color:#555;">$220,861.02</div>
<div class="r" style="left:1142.2px;top:680.60px;width:54.4px;height:15px;border-radius:4px;background:#f8f9fa;"></div>
<div class="t" style="left:1142.2px;width:54.4px;top:680.60px;height:15px;line-height:15px;font-size:8.85px;font-weight:700;color:#000;text-align:center;">PLANNED</div>
<div class="r" style="left:238px;top:706px;width:977px;height:1px;background:#e6e9ed;"></div>
<div class="t" style="left:256.80px;top:718.77px;font-size:11.85px;color:#555;">Invoice Not Generated</div>
<div class="t" style="left:416.70px;top:718.77px;font-size:11.85px;color:#555;">Hire 10</div>
<div class="t" style="left:516.30px;top:718.77px;font-size:11.85px;color:#555;">15 days</div>
<div class="t" style="left:576.70px;top:718.77px;font-size:11.85px;color:#555;">11 Sep 2024 <svg width="1em" height="0.6em" viewBox="0 0 12 7" style="vertical-align:0.03em"><path d="M0.6 3.5H11M8.5 1.1L11.1 3.5L8.5 5.9" fill="none" stroke="currentColor" stroke-width="1.1"/></svg> 26 Sep 2024</div>
<div class="t" style="left:895.90px;top:718.77px;font-size:11.85px;color:#555;">$220,875.00</div>
<div class="r" style="left:1142.2px;top:718.00px;width:54.4px;height:15px;border-radius:4px;background:#f8f9fa;"></div>
<div class="t" style="left:1142.2px;width:54.4px;top:718.00px;height:15px;line-height:15px;font-size:8.85px;font-weight:700;color:#000;text-align:center;">PLANNED</div>
<div class="r" style="left:238px;top:743px;width:977px;height:1px;background:#e6e9ed;"></div>
<div class="r" style="left:44px;top:30px;width:1192px;height:691px;box-sizing:border-box;border:1px solid rgba(128,128,128,.28);border-radius:7px 7px 9px 9px;"></div>
</div></body></html>
